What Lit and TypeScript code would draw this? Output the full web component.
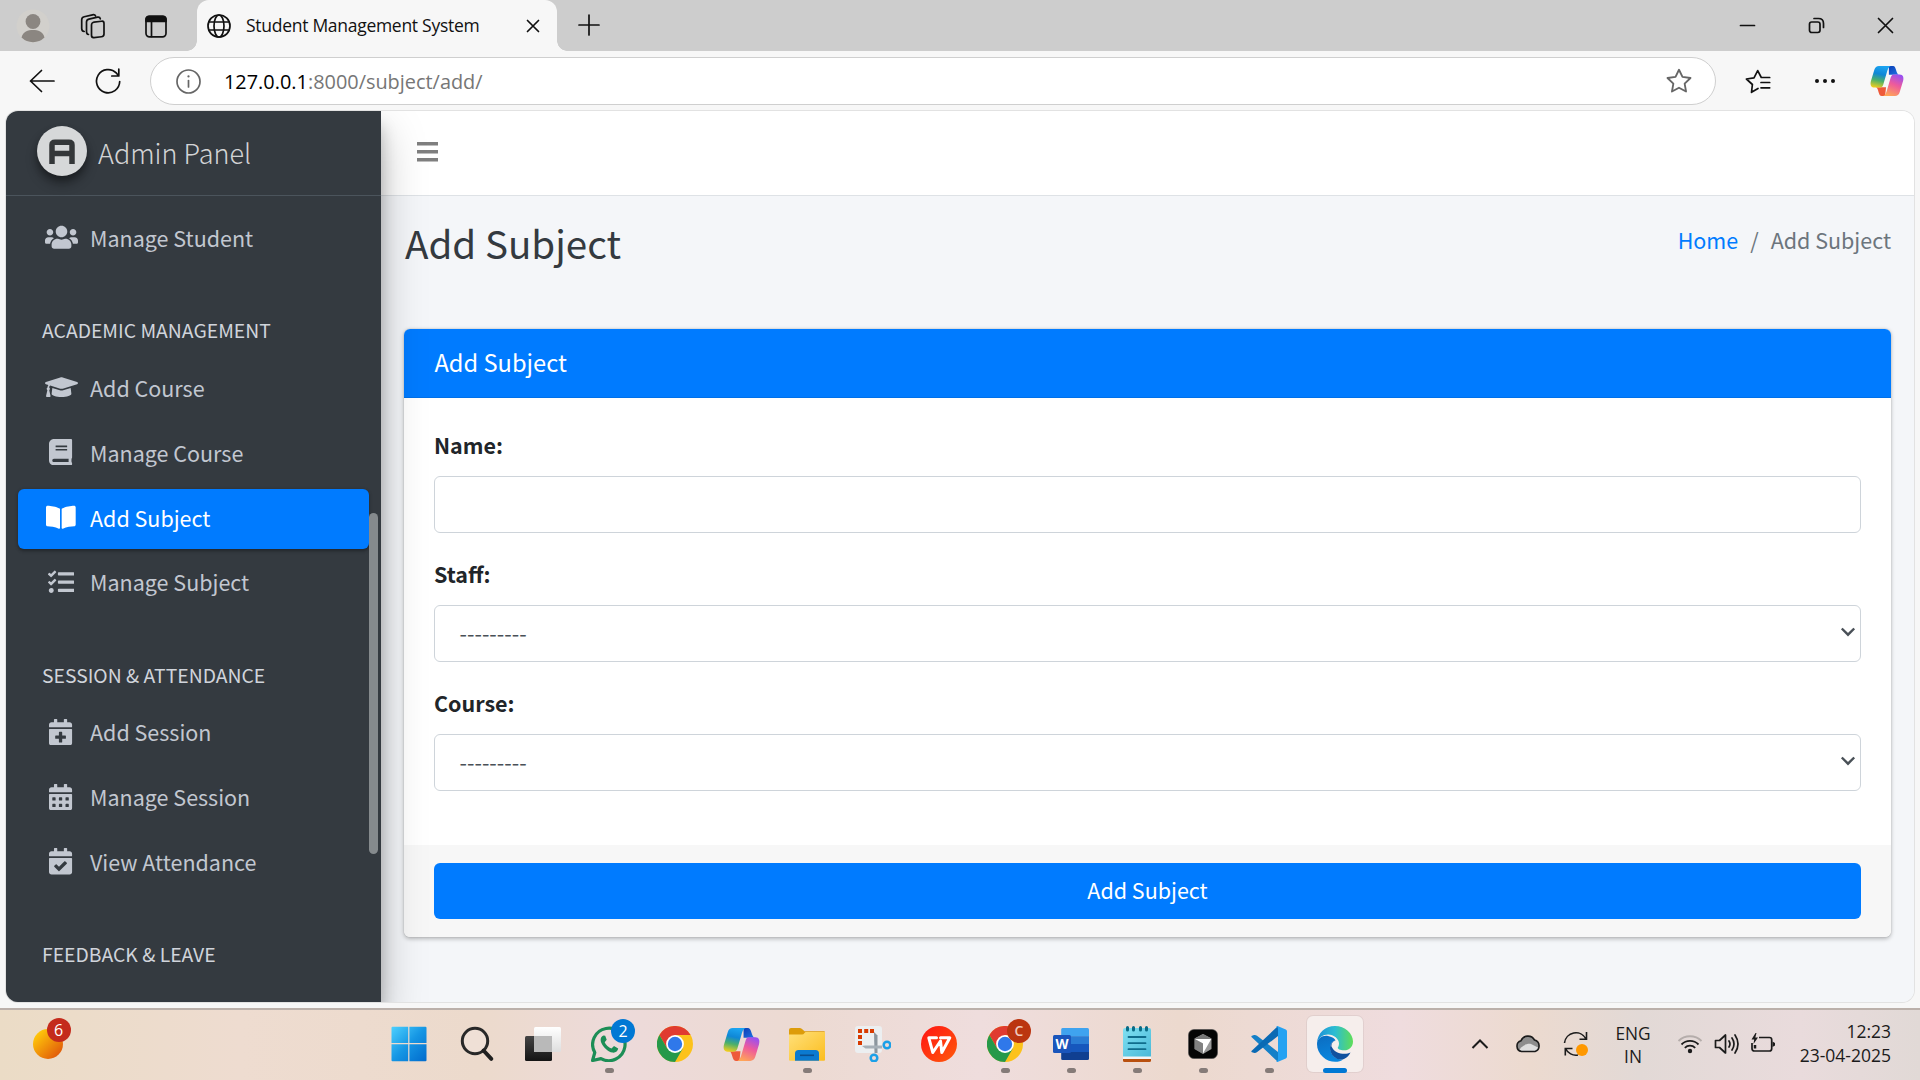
import { LitElement, html, svg, css, nothing } from "lit";
import { customElement } from "lit/decorators.js";

const uiFont = css`"Open Sans", "Noto Sans", sans-serif`;
const webFont = css`"Noto Sans CJK SC", "Noto Sans", sans-serif`;

/* ---------- Browser chrome icons ---------- */

const star = "M12 1.6 L15.2 8.2 L22.6 9.2 L17.2 14.4 L18.5 21.7 L12 18.2 L5.5 21.7 L6.8 14.4 L1.4 9.2 L8.8 8.2 Z";

const copilot = (size: number, id: string) => html`
  <svg width=${size} height=${size} viewBox="0 0 36 36">
    <defs>
      <linearGradient id="${id}a" x1="0.4" y1="0" x2="0.2" y2="1">
        <stop offset="0" stop-color="#1ba3f0" /><stop offset="0.35" stop-color="#0f87d6" />
        <stop offset="0.65" stop-color="#4cb06a" /><stop offset="1" stop-color="#f7cf1b" />
      </linearGradient>
      <linearGradient id="${id}b" x1="0.7" y1="0" x2="0.3" y2="1">
        <stop offset="0" stop-color="#9a50f0" /><stop offset="0.45" stop-color="#ee5a9c" />
        <stop offset="1" stop-color="#ffa657" />
      </linearGradient>
      <linearGradient id="${id}c" x1="0" y1="0" x2="1" y2="1">
        <stop offset="0" stop-color="#0b3fb5" /><stop offset="1" stop-color="#1f74e6" />
      </linearGradient>
    </defs>
    <path d="M20 2 H24.5 C28 2 27.5 11 31 11.5 H20 Z" fill="url(#${id}c)" />
    <path d="M16 34 H12.5 C8.500 34 9.500 25 6 24.500 H17 Z" fill="#ee5a3a" />
    <path d="M9.500 2 H22 C19.500 3 18.600 6 17.800 9 L14 22 C13.200 24.500 12 25 10 25 H4.500 C0.800 25 0 21.500 1 18 L4.600 6 C5.400 3.400 7 2 9.500 2 Z" fill="url(#${id}a)" />
    <path d="M26.500 34 H14 C16.500 33 17.400 30 18.200 27 L22 14 C22.800 11.500 24 11 26 11 H31.500 C35.200 11 36 14.500 35 18 L31.400 30 C30.600 32.600 29 34 26.500 34 Z" fill="url(#${id}b)" />
  </svg>`;

@customElement("browser-chrome")
class BrowserChrome extends LitElement {
  static styles = css`
    :host { display: block; font-family: ${uiFont}; color: #111; }
    svg { display: block; flex: none; fill: none; stroke: #111; stroke-width: 1.7; stroke-linecap: round; stroke-linejoin: round; }
    .copilot svg, .avatar { stroke: none; }
    .strip { height: 51px; background: #cdcdcd; display: flex; align-items: center; }
    .tools { width: 197px; box-sizing: border-box; padding: 1px 0 0 16px; display: flex; align-items: center; }
    .tools .spaces { margin-left: 30px; }
    .tools .pane { margin-left: 39px; }
    .tab { align-self: stretch; width: 360px; box-sizing: border-box; background: #f7f7f7; border-radius: 12px 12px 0 0; display: flex; align-items: center; padding: 1px 17px 0 10px; position: relative; }
    .tab::before, .tab::after { content: ""; position: absolute; bottom: 0; width: 10px; height: 10px; }
    .tab::before { left: -10px; background: radial-gradient(circle at 0 0, #cdcdcd 9.500px, #f7f7f7 10px); }
    .tab::after { right: -10px; background: radial-gradient(circle at 100% 0, #cdcdcd 9.500px, #f7f7f7 10px); }
    .title { margin: -2px 0 0 15px; font-size: 17.500px; line-height: 24px; white-space: nowrap; letter-spacing: -0.28px; }
    .tab .close { margin-left: auto; }
    .plus { margin: -1px 0 0 21px; }
    .controls { margin-left: auto; display: flex; align-items: center; padding-right: 26px; gap: 52px; }
    .bar { height: 60px; box-sizing: border-box; background: #f7f7f7; display: flex; align-items: center; padding-left: 29px; }
    .refresh { margin-left: 39px; }
    .address { margin-left: 29px; width: 1566px; height: 48px; box-sizing: border-box; border: 1.500px solid #cfcfcf; border-radius: 24px; background: #fff; display: flex; align-items: center; padding: 0 23px 0 25px; }
    .url { margin: 1px 0 0 23px; font-size: 19.900px; line-height: 26px; color: #767676; letter-spacing: 0; }
    .url b { font-weight: 400; color: #000; }
    .address .star { margin-left: auto; }
    .gray { stroke: #666; }
    .fav { margin-left: 29px; }
    .bar .dots { margin-left: 43px; stroke: none; fill: #111; }
    .copilot { margin-left: 34px; }
  `;
  render() {
    return html`
      <div class="strip">
        <div class="tools">
          <svg class="avatar" width="34" height="34" viewBox="0 0 34 34">
            <circle cx="17" cy="17" r="16.500" fill="#d2d0cc" />
            <circle cx="17" cy="12.500" r="7.400" fill="#8b8681" />
            <path d="M5.500 28.500 C7 22.500 12 21 17 21 C22 21 27 22.500 28.500 28.500 A16.500 16.500 0 0 1 5.500 28.500 Z" fill="#8b8681" />
          </svg>
          <svg class="spaces" width="26" height="26" viewBox="0 0 26 26">
            <rect x="11.500" y="8.500" width="12.500" height="15.500" rx="2.500" transform="skewY(-6) translate(0 2)" />
            <path d="M8.500 21.500 C6.800 21.300 6.500 20 6.500 18.500 V9 C6.500 7.400 7.400 6.500 8.900 6.100 L17.500 4.200 C19 3.900 20 4.500 20.300 5.800" />
            <path d="M4.200 18.500 C2.600 18.300 1.700 17 1.700 15.500 V6.800 C1.700 5 2.600 4.100 4.200 3.700 L12.500 1.800 C14 1.500 15.200 2 15.600 3" />
          </svg>
          <svg class="pane" width="22" height="23" viewBox="0 0 22 23">
            <rect x="1" y="1.300" width="20" height="20.500" rx="3.500" />
            <path d="M1 6.300 V4.500 Q1 1.300 4.200 1.300 H17.800 Q21 1.300 21 4.500 V6.300 Z" fill="#111" />
            <path d="M6.500 7 V21.500" />
          </svg>
        </div>
        <div class="tab">
          <svg width="24" height="24" viewBox="0 0 24 24">
            <circle cx="12" cy="12" r="11" /><ellipse cx="12" cy="12" rx="5" ry="11" />
            <path d="M2 8 H22 M2 16 H22" />
          </svg>
          <span class="title">Student Management System</span>
          <svg class="close" width="14" height="14" viewBox="0 0 14 14"><path d="M1.500 1.500 L12.500 12.500 M12.500 1.500 L1.500 12.500" /></svg>
        </div>
        <svg class="plus" width="22" height="22" viewBox="0 0 22 22"><path d="M11 1 V21 M1 11 H21" /></svg>
        <div class="controls">
          <svg width="17" height="16" viewBox="0 0 17 16"><path d="M1.500 7.500 H15.500" /></svg>
          <svg width="17" height="17" viewBox="0 0 17 17">
            <rect x="1.500" y="5" width="10.500" height="10.500" rx="2.200" />
            <path d="M6 1.500 H10.500 Q15.500 1.500 15.500 6.500 V10.500" />
          </svg>
          <svg width="17" height="17" viewBox="0 0 17 17"><path d="M1.500 1.500 L15.500 15.500 M15.500 1.500 L1.500 15.500" /></svg>
        </div>
      </div>
      <div class="bar">
        <svg width="27" height="24" viewBox="0 0 27 24"><path d="M1.500 12 H25 M12.500 1.500 L1.500 12 L12.500 22.500" /></svg>
        <svg class="refresh" width="26" height="26" viewBox="0 0 26 26">
          <path d="M24.700 13.500 A11.600 11.600 0 1 1 21.500 5.200 L23.600 7.700 M23.800 1.200 V8 H16.800" />
        </svg>
        <div class="address">
          <svg class="gray" width="25" height="25" viewBox="0 0 25 25">
            <circle cx="12.500" cy="12.500" r="11.500" /><path d="M12.500 11.500 V18" /><path d="M12.500 7.300 V7.500" stroke-width="2.200" />
          </svg>
          <span class="url"><b>127.0.0.1</b>:8000/subject/add/</span>
          <svg class="star gray" width="26" height="26" viewBox="0 0 24 24"><path d=${star} /></svg>
        </div>
        <svg class="fav" width="26" height="25" viewBox="0 0 26 25">
          <path d="M6.500 23.300 L7.400 15.500 L1.400 10 L9 8.800 L12.700 1.600 L16.300 8.500 H24.700 M16 13.500 H24.700 M16 18.800 H24.700 M6.500 23.300 L13 19.500" />
        </svg>
        <svg class="dots" width="22" height="6" viewBox="0 0 22 6">
          <circle cx="3" cy="3" r="2" /><circle cx="11" cy="3" r="2" /><circle cx="19" cy="3" r="2" />
        </svg>
        <div class="copilot">${copilot(34, "bc")}</div>
      </div>`;
  }
}

/* ---------- Sidebar ---------- */

const calendarTop = "M436 160H12c-6.600 0-12-5.400-12-12v-36c0-26.500 21.500-48 48-48h48V12c0-6.600 5.400-12 12-12h40c6.600 0 12 5.400 12 12v52h128V12c0-6.600 5.400-12 12-12h40c6.600 0 12 5.400 12 12v52h48c26.500 0 48 21.500 48 48v36c0 6.600-5.400 12-12 12zM12 192h424c6.600 0 12 5.400 12 12v260c0 26.500-21.500 48-48 48H48c-26.500 0-48-21.500-48-48V204c0-6.600 5.400-12 12-12z";

const navIcons: Record<string, { w: number; d: string }> = {
  users: { w: 640, d: "M96 224c35.300 0 64-28.700 64-64s-28.700-64-64-64-64 28.700-64 64 28.700 64 64 64zm448 0c35.300 0 64-28.700 64-64s-28.700-64-64-64-64 28.700-64 64 28.700 64 64 64zm32 32h-64c-17.600 0-33.500 7.100-45.100 18.600 40.300 22.100 68.900 62 75.100 109.400h66c17.700 0 32-14.300 32-32v-32c0-35.300-28.700-64-64-64zm-256 0c61.900 0 112-50.100 112-112S381.900 32 320 32 208 82.100 208 144s50.100 112 112 112zm76.800 32h-8.300c-20.800 10-43.900 16-68.500 16s-47.600-6-68.500-16h-8.300C179.600 288 128 339.600 128 403.200V432c0 26.500 21.500 48 48 48h288c26.500 0 48-21.500 48-48v-28.800c0-63.600-51.600-115.200-115.200-115.200zm-223.700-13.400C161.500 263.100 145.600 256 128 256H64c-35.300 0-64 28.700-64 64v32c0 17.700 14.300 32 32 32h65.900c6.300-47.400 34.900-87.300 75.200-109.400z" },
  cap: { w: 640, d: "M622.340 153.200L343.400 67.500c-15.200-4.670-31.600-4.670-46.790 0L17.660 153.200c-23.540 7.230-23.540 38.360 0 45.590l48.630 14.940c-10.670 13.190-17.230 29.280-17.880 46.900C38.780 266.150 32 276.110 32 288c0 10.780 5.680 19.850 13.860 25.650L20.330 428.530C18.110 438.520 25.710 448 35.940 448h56.110c10.240 0 17.840-9.480 15.620-19.470L82.140 313.650C90.320 307.850 96 298.780 96 288c0-11.570-6.470-21.250-15.660-26.870.76-15.020 8.440-28.300 20.690-36.720L296.600 284.500c9.060 2.780 26.440 6.250 46.790 0l278.950-85.700c23.550-7.240 23.550-38.360 0-45.600zM352.790 315.090c-28.530 8.760-52.840 3.920-65.590 0l-145.020-44.550L128 384c0 35.350 85.960 64 192 64s192-28.650 192-64l-14.180-113.470-145.030 44.560z" },
  book: { w: 448, d: "M448 360V24c0-13.300-10.700-24-24-24H96C43 0 0 43 0 96v320c0 53 43 96 96 96h328c13.300 0 24-10.700 24-24v-16c0-7.500-3.500-14.300-8.900-18.700-4.200-15.400-4.200-59.300 0-74.700 5.400-4.300 8.900-11.100 8.900-18.600zM128 134c0-3.300 2.700-6 6-6h212c3.300 0 6 2.700 6 6v20c0 3.300-2.700 6-6 6H134c-3.300 0-6-2.700-6-6v-20zm0 64c0-3.300 2.700-6 6-6h212c3.300 0 6 2.700 6 6v20c0 3.300-2.700 6-6 6H134c-3.300 0-6-2.700-6-6v-20zm253.400 250H96c-17.700 0-32-14.300-32-32 0-17.600 14.400-32 32-32h285.400c-1.900 17.100-1.900 46.900 0 64z" },
  open: { w: 576, d: "M542.220 32.050c-54.800 3.110-163.720 14.430-230.960 55.590-4.640 2.840-7.270 7.890-7.270 13.170v363.870c0 11.550 12.630 18.850 23.280 13.490 69.180-34.820 169.230-44.320 218.700-46.920 16.890-.89 30.020-14.430 30.020-30.660V62.750c.01-17.710-15.350-31.740-33.770-30.700zM264.730 87.640C197.500 46.480 88.580 35.170 33.780 32.050 15.360 31.010 0 45.040 0 62.750V400.600c0 16.240 13.130 29.780 30.020 30.660 49.490 2.600 149.590 12.110 218.770 46.950 10.620 5.350 23.210-1.940 23.210-13.460V100.630c0-5.290-2.620-10.140-7.270-12.990z" },
  tasks: { w: 512, d: "M139.610 35.500a12 12 0 0 0-17 0L58.930 98.810l-22.700-22.120a12 12 0 0 0-17 0L3.530 92.410a12 12 0 0 0 0 17l47.590 47.400a12.780 12.780 0 0 0 17.610 0l15.590-15.620L156.520 69a12.090 12.090 0 0 0 .09-17zm0 159.190a12 12 0 0 0-17 0l-63.680 63.720-22.700-22.100a12 12 0 0 0-17 0L3.530 252a12 12 0 0 0 0 17L51 316.500a12.770 12.770 0 0 0 17.600 0l15.700-15.690 72.200-72.220a12 12 0 0 0 .09-16.900zM64 368c-26.490 0-48.590 21.500-48.590 48S37.530 464 64 464a48 48 0 0 0 0-96zm432 16H208a16 16 0 0 0-16 16v32a16 16 0 0 0 16 16h288a16 16 0 0 0 16-16v-32a16 16 0 0 0-16-16zm0-320H208a16 16 0 0 0-16 16v32a16 16 0 0 0 16 16h288a16 16 0 0 0 16-16V80a16 16 0 0 0-16-16zm0 160H208a16 16 0 0 0-16 16v32a16 16 0 0 0 16 16h288a16 16 0 0 0 16-16v-32a16 16 0 0 0-16-16z" },
  plus: { w: 448, d: calendarTop + "m316 140c0-6.600-5.400-12-12-12h-60v-60c0-6.600-5.400-12-12-12h-40c-6.600 0-12 5.400-12 12v60h-60c-6.600 0-12 5.400-12 12v40c0 6.600 5.400 12 12 12h60v60c0 6.600 5.400 12 12 12h40c6.600 0 12-5.400 12-12v-60h60c6.600 0 12-5.400 12-12v-40z" },
  grid: { w: 448, d: calendarTop + "M76 256h40q12 0 12 12v40q0 12-12 12h-40q-12 0-12-12v-40q0-12 12-12zM204 256h40q12 0 12 12v40q0 12-12 12h-40q-12 0-12-12v-40q0-12 12-12zM332 256h40q12 0 12 12v40q0 12-12 12h-40q-12 0-12-12v-40q0-12 12-12zM76 384h40q12 0 12 12v40q0 12-12 12h-40q-12 0-12-12v-40q0-12 12-12zM204 384h40q12 0 12 12v40q0 12-12 12h-40q-12 0-12-12v-40q0-12 12-12zM332 384h40q12 0 12 12v40q0 12-12 12h-40q-12 0-12-12v-40q0-12 12-12z" },
  check: { w: 448, d: calendarTop + "M345.300 287.900l-28.200-28.400c-4.700-4.700-12.300-4.700-17-.1L194 364.700l-46.100-46.400c-4.700-4.700-12.300-4.700-17-.1l-28.400 28.200c-4.700 4.700-4.700 12.300-.1 17l82.600 83.300c4.700 4.700 12.300 4.700 17 .1l143.200-142c4.700-4.600 4.700-12.200 .1-16.900z" },
};

type NavEntry = { header: string } | { icon: string; label: string; active?: boolean };

const nav: NavEntry[] = [
  { icon: "users", label: "Manage Student" },
  { header: "ACADEMIC MANAGEMENT" },
  { icon: "cap", label: "Add Course" },
  { icon: "book", label: "Manage Course" },
  { icon: "open", label: "Add Subject", active: true },
  { icon: "tasks", label: "Manage Subject" },
  { header: "SESSION & ATTENDANCE" },
  { icon: "plus", label: "Add Session" },
  { icon: "grid", label: "Manage Session" },
  { icon: "check", label: "View Attendance" },
  { header: "FEEDBACK & LEAVE" },
];

@customElement("side-nav")
class SideNav extends LitElement {
  static styles = css`
    :host { display: flex; flex-direction: column; width: 375px; background: #343a40; font-family: ${webFont}; color: #c2c7d0; box-shadow: 0 21px 42px rgba(0, 0, 0, 0.25), 0 15px 15px rgba(0, 0, 0, 0.22); position: relative; z-index: 2; }
    svg { display: block; flex: none; }
    .brand { height: 85px; box-sizing: border-box; border-bottom: 1px solid #4b545c; display: flex; align-items: center; padding: 0 0 5px 31px; }
    .logo { width: 50px; height: 50px; border-radius: 50%; background: #d6d8d9; box-shadow: 0 8px 12px rgba(0, 0, 0, 0.3), 0 4px 6px rgba(0, 0, 0, 0.25); }
    .name { margin: 4px 0 0 11px; font-size: 27px; font-weight: 300; line-height: 36px; color: rgba(255, 255, 255, 0.8); white-space: nowrap; }
    .list { flex: 1; min-height: 0; padding: 13.400px 12px 0; position: relative; }
    .item { height: 60px; margin-bottom: 4.800px; border-radius: 6px; display: flex; align-items: center; padding-left: 24px; box-sizing: border-box; font-size: 21.500px; white-space: nowrap; }
    .item.active { background: #007bff; color: #fff; box-shadow: 0 1.500px 4.500px rgba(0, 0, 0, 0.12), 0 1.500px 3px rgba(0, 0, 0, 0.24); }
    .icon { width: 38px; display: flex; justify-content: center; margin: 0 10px 4px 0; }
    .label { line-height: 36px; margin-top: -3px; }
    .header { padding: 38px 0 11.300px 24px; font-size: 19.350px; line-height: 36px; color: #d0d4db; white-space: nowrap; }
    .thumb { position: absolute; left: 363px; top: 317px; width: 9px; height: 341px; border-radius: 5px; background: #858a8d; }
  `;
  render() {
    return html`
      <div class="brand">
        <svg class="logo" viewBox="0 0 50 50">
          <g fill="none" stroke="#343739" stroke-width="5.500">
            <path d="M15 38 V19 Q15 16.200 18 16.200 H32 Q35 16.200 35 19 V38" />
            <path d="M15 27.500 H35" />
          </g>
        </svg>
        <span class="name">Admin Panel</span>
      </div>
      <div class="list">
        ${nav.map((n) =>
          "header" in n
            ? html`<div class="header">${n.header}</div>`
            : html`<div class="item ${n.active ? "active" : ""}">
                <span class="icon">
                  <svg width=${(navIcons[n.icon].w / 512) * 26.4} height="26.4" viewBox="0 0 ${navIcons[n.icon].w} 512" fill="currentColor" fill-rule="evenodd"><path d=${navIcons[n.icon].d} /></svg>
                </span>
                <span class="label">${n.label}</span>
              </div>`
        )}
        <div class="thumb"></div>
      </div>`;
  }
}

/* ---------- Subject form ---------- */

@customElement("subject-page")
class SubjectPage extends LitElement {
  static styles = css`
    :host { display: block; flex: 1; min-width: 0; background: #f4f6f9; font-family: ${webFont}; font-size: 21.500px; color: #212529; }
    .navbar { height: 85px; box-sizing: border-box; border-bottom: 1.500px solid #dee2e6; background: #fff; display: flex; align-items: center; padding: 0 0 2px 36px; }
    .head { display: flex; justify-content: space-between; padding: 20px 23px 0 24px; height: 133px; box-sizing: border-box; white-space: nowrap; }
    h1 { margin: 0; font-size: 38.600px; line-height: 52px; font-weight: 400; color: #343a40; }
    .crumbs { display: flex; line-height: 36px; margin-top: 6px; color: #6c757d; }
    .crumbs a { color: #007bff; }
    .crumbs i { font-style: normal; padding: 0 12px; }
    .card { margin: 0 23px; height: 608px; display: flex; flex-direction: column; background: #fff; border-radius: 6px; overflow: hidden; box-shadow: 0 0 1.500px rgba(0, 0, 0, 0.2), 0 1.500px 4.500px rgba(0, 0, 0, 0.25); }
    .card-head { height: 69px; box-sizing: border-box; background: #007bff; border-bottom: 1px solid #0070e8; color: #fff; font-size: 23.650px; line-height: 66px; padding-left: 30.500px; }
    .fields { flex: 1; padding: 30px; }
    .field { margin-bottom: 24px; }
    label { display: block; height: 48px; line-height: 34px; font-weight: 700; }
    .control { height: 57px; box-sizing: border-box; border: 1.500px solid #ced4da; border-radius: 6px; display: flex; align-items: center; justify-content: space-between; padding: 0 4px 2px 24.500px; color: #495057; }
    .control svg { display: block; }
    .foot { height: 92.500px; box-sizing: border-box; background: #f7f7f7; padding: 18px 30px; }
    .btn { height: 56px; border-radius: 6px; background: #007bff; color: #fff; text-align: center; line-height: 54px; }
  `;
  private control(text?: string) {
    return html`<div class="control">
      ${text
        ? html`<span>${text}</span>
            <svg width="16" height="10" viewBox="0 0 16 10" fill="none" stroke="#495057" stroke-width="2.400"><path d="M1.800 1.500 L8 7.700 L14.200 1.500" /></svg>`
        : nothing}
    </div>`;
  }
  render() {
    return html`
      <div class="navbar">
        <svg width="21" height="20" viewBox="0 0 21 20" fill="#7f7f7f"><path d="M0 0h21v3.500H0zM0 8h21v3.500H0zM0 16h21v3.500H0z" /></svg>
      </div>
      <div class="head">
        <h1>Add Subject</h1>
        <div class="crumbs"><a>Home</a><i>/</i><span>Add Subject</span></div>
      </div>
      <div class="card">
        <div class="card-head">Add Subject</div>
        <div class="fields">
          <div class="field"><label>Name:</label>${this.control()}</div>
          <div class="field"><label>Staff:</label>${this.control("---------")}</div>
          <div class="field"><label>Course:</label>${this.control("---------")}</div>
        </div>
        <div class="foot"><div class="btn">Add Subject</div></div>
      </div>`;
  }
}

/* ---------- Taskbar ---------- */

const chrome = svg`
  <circle cx="18" cy="18" r="18" fill="#fcc21b" />
  <path d="M2.400 9 A18 18 0 0 1 33.600 9 H18 L10.200 22.500 Z" fill="#e03b30" />
  <path d="M2.400 9 L10.200 22.500 L18 26 L25.800 22.500 L18 36 A18 18 0 0 1 2.400 9 Z" fill="#26994a" />
  <circle cx="18" cy="18" r="8.900" fill="#fff" /><circle cx="18" cy="18" r="7.200" fill="#2f78ea" />`;

const wrap = (content: unknown) => html`<svg width="36" height="36" viewBox="0 0 36 36">${content}</svg>`;

const apps: { art: unknown; running?: boolean; active?: boolean; badge?: string; tone?: string }[] = [
  { art: wrap(svg`
      <defs><linearGradient id="win" x1="0" y1="0" x2="36" y2="36" gradientUnits="userSpaceOnUse"><stop offset="0" stop-color="#4fd2ff" /><stop offset="0.500" stop-color="#1596e4" /><stop offset="1" stop-color="#0069cc" /></linearGradient></defs>
      <path fill="url(#win)" d="M1.500 .8H17.200V17H.5V1.800Q.5.800 1.500.800ZM18.400.800H34.500Q35.500.800 35.500 1.800V17H18.400ZM.5 18.200H17.200V35.200H1.500Q.5 35.200.5 34.200ZM18.400 18.200H35.500V34.200Q35.500 35.200 34.500 35.200H18.400Z" />`) },
  { art: wrap(svg`<circle cx="16" cy="15" r="12.700" fill="#f2e6e0" fill-opacity=".5" stroke="#282828" stroke-width="3" /><path d="M24.500 24.500 L32.300 32.800" stroke="#202020" stroke-width="4" stroke-linecap="round" />`) },
  { art: wrap(svg`
      <defs><linearGradient id="tv" x1="0" y1="0" x2="0" y2="1"><stop offset="0" stop-color="#444" /><stop offset="1" stop-color="#141414" /></linearGradient>
      <linearGradient id="tw" x1="0" y1="0" x2="0" y2="1"><stop offset="0" stop-color="#fff" /><stop offset="1" stop-color="#dedede" /></linearGradient></defs>
      <rect x="0" y="10" width="27" height="25" rx="1.500" fill="url(#tv)" /><rect x="9" y="1" width="27" height="25" rx="1.500" fill="url(#tw)" /><path d="M9 10H27V26H9Z" fill="#b9b9b9" />`) },
  { running: true, badge: "2", tone: "blue", art: wrap(svg`
      <path d="M1.500 34.500 L3.800 26.500 A16.200 16.200 0 1 1 10 32.600 Z" fill="none" stroke="#1c8e56" stroke-width="3.200" stroke-linejoin="round" />
      <path d="M12.500 9.500 C9.500 10.500 9 14 10.500 17.200 C12.800 22 17 25.500 21.500 26.600 C24.500 27 27 25 27.200 22.500 L23 20 L20.500 22.500 C17.500 21.500 14.800 18.800 13.700 16.200 L15.700 13.700 L14.200 9.800 Z" fill="#1c8e56" />`) },
  { art: wrap(chrome) },
  { art: copilot(37, "tb") },
  { running: true, art: wrap(svg`
      <defs><linearGradient id="fo" x1="0" y1="0" x2="1" y2="1"><stop offset="0" stop-color="#ffe07a" /><stop offset="1" stop-color="#fbbd1e" /></linearGradient></defs>
      <path d="M0 4 Q0 2 2 2 H10.500 Q12 2 13 3 L15.500 5.200 H35 Q36 5.200 36 6.500 V12 H0 Z" fill="#dd9c0a" />
      <path d="M0 8.500 H13 Q14.500 8.500 15.500 7 L16.500 6 H36 V33.500 Q36 34.700 35 34.700 H1 Q0 34.700 0 33.500 Z" fill="url(#fo)" />
      <path d="M6 34.700 V27.500 Q6 24 9.500 24 H26.500 Q30 24 30 27.500 V34.700 Z" fill="#0b7ad0" /><path d="M11 29.300 H25" stroke="#0a4e8f" stroke-width="1.600" />`) },
  { art: wrap(svg`
      <rect x="0" y="0" width="27" height="27" rx="3" fill="#eceff1" />
      <g fill="#d83b01"><path d="M3 3h4v4H3zM9.200 3h4v4h-4zM15 3h4v4h-4zM3 9h4v4H3zM3 15h4v4H3z" /></g>
      <path d="M19 6 L22.500 9.500 V27 H19.500 Z" fill="#8b969e" /><path d="M7 20 L10.500 22.500 H27 V19.500 H10 Z" fill="#a6b0b8" />
      <circle cx="32" cy="19" r="3.300" fill="none" stroke="#1ba0e8" stroke-width="2.500" /><circle cx="19" cy="32" r="3.300" fill="none" stroke="#1ba0e8" stroke-width="2.500" />`) },
  { art: wrap(svg`
      <defs><linearGradient id="wps" x1="0" y1="0" x2="1" y2="1"><stop offset="0" stop-color="#ff1414" /><stop offset="1" stop-color="#ff5a0a" /></linearGradient></defs>
      <circle cx="18" cy="18" r="18" fill="url(#wps)" />
      <path d="M15.500 11.800 H7.800 L11.800 26.500 L19.500 15 L20.800 26.500 L28.800 11.800 H19.500" fill="none" stroke="#fff" stroke-width="3" stroke-linejoin="round" stroke-linecap="round" />`) },
  { running: true, badge: "C", tone: "brick", art: wrap(chrome) },
  { running: true, art: wrap(svg`
      <path d="M9.500 2 H34.500 Q36 2 36 3.500 V10.500 H8.200 V3.500 Q8.200 2 9.500 2Z" fill="#3fa3ef" /><path d="M8.200 10.200H36V18H8.200z" fill="#2a7cd4" /><path d="M8.200 18H36V26H8.200z" fill="#1657bd" /><path d="M8.200 26H36V32.500Q36 34 34.500 34H9.500Q8.200 34 8.200 32.500Z" fill="#103f91" />
      <rect x="0" y="9" width="18" height="18" rx="1.500" fill="#1a55bb" />
      <text x="9" y="22.800" text-anchor="middle" font-family="Open Sans, sans-serif" font-weight="700" font-size="13.500" fill="#fff">W</text>`) },
  { running: true, art: wrap(svg`
      <defs><linearGradient id="np" x1="0" y1="0" x2="1" y2="1"><stop offset="0" stop-color="#7fe0f2" /><stop offset="1" stop-color="#4ab9d8" /></linearGradient></defs>
      <path d="M4 30H32V34.500Q32 36 30.500 36H5.500Q4 36 4 34.500Z" fill="#b9500f" /><path d="M4 28H32V33H4z" fill="#f5f5f5" />
      <path d="M4 4Q4 2 6 2H30Q32 2 32 4V30.500H4Z" fill="url(#np)" />
      <path d="M8.500 1.500v2.500M14.500 1.500v2.500M21.500 1.500v2.500M27.500 1.500v2.500" stroke="#0a6a85" stroke-width="3" stroke-linecap="round" />
      <path d="M9.500 11H26.500M9.500 17.200H26.500M9.500 23.200H26.500" stroke="#0f6c8c" stroke-width="1.800" stroke-linecap="round" />`) },
  { running: true, art: wrap(svg`
      <rect x="3.500" y="3.500" width="29" height="29" rx="5.500" fill="#050505" stroke="#4a4a4a" stroke-width=".6" />
      <path d="M18 8 L26.500 12.500 V23 L18 28 L9.500 23 V12.500 Z" fill="#9a9a9a" /><path d="M9.500 12.500 L18 8 L26.500 12.500 L18 14Z" fill="#777" /><path d="M10 13 H26.200 L18 27.500 V17.500 Z" fill="#fff" /><path d="M9.500 13 L18 17.500 V28 L9.500 23Z" fill="#6d6d6d" fill-opacity=".55" />`) },
  { running: true, art: wrap(svg`
      <path d="M1 11.500 Q-.3 10.500 1 9.800 L3 9 Q4.500 8.600 6 9.800 L27 26 V36 Z" fill="#1580c8" />
      <path d="M1 24.500 Q-.3 25.500 1 26.200 L3.500 27 Q5 27 6.500 25.800 L27 10 V0 Z" fill="#0a6ab4" />
      <path d="M26.500 0 L34.800 3.500 Q36 4.200 36 5.500 V30.500 Q36 31.800 34.800 32.500 L26.500 36 Q25.500 36 25 35.200 Q27 35.500 27 33 V3 Q27 .5 25 .8 Q25.600 0 26.500 0Z" fill="#25a2f2" />`) },
  { running: true, active: true, art: wrap(svg`
      <defs><linearGradient id="eg" x1="0" y1="0.500" x2="1" y2="0.500"><stop offset="0" stop-color="#1c8fd8" /><stop offset="0.500" stop-color="#2cbdd2" /><stop offset="1" stop-color="#5fdd57" /></linearGradient>
      <linearGradient id="eb" x1="0" y1="0" x2="0.300" y2="1"><stop offset="0" stop-color="#0c6cc0" /><stop offset="1" stop-color="#0a86de" /></linearGradient></defs>
      <path d="M0 18 C0 12 6 9 11 10 C16 11 18 13 18.500 14.500 C15 15 12.500 19 13.500 24 C14.500 30 20 34 26 33.500 C22 37 12 37 6 31 C2 27.500 0 23 0 18 Z" fill="url(#eb)" />
      <path d="M18.500 14.500 C14.500 15.500 12 20 13.500 25 C15 31 21 35 27 33 C30 31.500 32.500 29 33.500 26.500 C29 29 18 28.500 14.500 20.500 C14 18 15.500 15.500 18.500 14.500Z" fill="#11519f" />
      <path d="M0 17 C.5 7 8 0 18 0 C28 0 36 7.500 36 15.500 C36 21.500 31.500 24.500 27 24.300 C23 24.200 20.500 23 20.800 21.500 C21.500 20.500 22 19 22 17.500 C22 13 17 8.500 11 8.500 C6 8.500 1.500 11.500 0 17 Z" fill="url(#eg)" />`) },
];

@customElement("task-bar")
class TaskBar extends LitElement {
  static styles = css`
    :host { display: flex; height: 72px; box-sizing: border-box; border-top: 2px solid #bbb0aa; font-family: ${uiFont}; color: #1b1b1b;
      background: linear-gradient(90deg, #ebdcc6 0, #eedcd0 240px, #ecdacc 480px, #eddada 620px, #ecdad2 800px, #efdddd 980px, #ecd9ce 1180px, #efdcde 1400px, #ecdacf 1530px, #e2d9d6 1640px, #e9dbdc 1800px, #e1d9d6 1920px); }
    svg { display: block; flex: none; }
    .weather { width: 376px; box-sizing: border-box; padding: 19px 0 0 33px; }
    .sun { width: 30px; height: 30px; border-radius: 50%; background: linear-gradient(135deg, #ffc60a 15%, #e0570a 90%); position: relative; }
    .badge { position: absolute; width: 24px; height: 24px; border-radius: 50%; color: #fff; font-size: 16px; line-height: 24px; text-align: center; }
    .sun .badge { left: 13.500px; top: -11px; background: #c42b1c; }
    .app { width: 56px; height: 56px; margin: 6px 5px 0; border-radius: 6px; display: flex; justify-content: center; align-items: center; position: relative; }
    .app:first-child { margin-right: 7px; }
    .app.active { background: #f6eeec; box-shadow: 0 0 0 1px rgba(0, 0, 0, 0.05); }
    .app .badge { left: 30px; top: 3px; }
    .blue { background: #0078d4; }
    .brick { background: #bb3510; font-size: 14px; color: #f0c9bd; font-weight: 600; }
    .running::after { content: ""; position: absolute; bottom: -1px; left: 23.500px; width: 9px; height: 5px; border-radius: 3px; background: #857b78; }
    .active::after { left: 16px; width: 24px; background: #0078d4; }
    .apps { display: flex; }
    .tray { margin-left: auto; display: flex; align-items: center; padding: 0 29px 2px 0; }
    .tray > * { flex: none; }
    .lang { width: 60px; text-align: center; font-size: 17.300px; line-height: 23px; margin-left: 3px; padding-top: 1px; }
    .wifi { margin-left: 14px; }
    .sound { margin-left: 11px; }
    .battery { margin-left: 10px; }
    .clock { width: 110px; text-align: right; font-size: 17.500px; line-height: 24px; margin-left: 5px; padding-bottom: 2px; white-space: nowrap; }
  `;
  render() {
    return html`
      <div class="weather"><div class="sun"><span class="badge">6</span></div></div>
      <div class="apps">
        ${apps.map((a) => html`
          <div class="app ${a.running ? "running" : ""} ${a.active ? "active" : ""}">
            ${a.art}${a.badge ? html`<span class="badge ${a.tone}">${a.badge}</span>` : nothing}
          </div>`)}
      </div>
      <div class="tray">
        <svg width="48" height="26" viewBox="0 0 48 26" fill="none" stroke="#1b1b1b" stroke-width="2"><path d="M16.500 17 L24 9.500 L31.500 17" /></svg>
        <svg width="48" height="26" viewBox="0 0 48 26">
          <path d="M17.500 20.500 A5.500 5.500 0 0 1 17 9.800 A7.500 7.500 0 0 1 30.500 9 A6 6 0 0 1 31 20.500 Z" fill="#8d8d8d" />
          <path d="M15 20 C16 16 22 12 27 13 L35 17 Q34.500 20.500 31 20.500 H17.500 Z" fill="#dedede" />
          <path d="M17.500 20.500 A5.500 5.500 0 0 1 17 9.800 A7.500 7.500 0 0 1 30.500 9 A6 6 0 0 1 31 20.500 Z" fill="none" stroke="#1b1b1b" stroke-width="1.600" />
        </svg>
        <svg width="48" height="28" viewBox="0 0 48 28" fill="none" stroke="#1b1b1b" stroke-width="1.600">
          <path d="M12.500 13 A11.500 11.500 0 0 1 34 8.800 M34.500 2 V9.300 H27.500 M26 25 A11.500 11.500 0 0 1 13.500 18.500 M13.300 25.500 V18.500 H20.500" />
          <circle cx="30" cy="20" r="6" fill="#ff9800" stroke="none" />
        </svg>
        <div class="lang">ENG<br />IN</div>
        <svg class="wifi" width="26" height="22" viewBox="0 0 26 22" fill="none" stroke="#1b1b1b" stroke-width="1.800">
          <path d="M1.500 8 A16.300 16.300 0 0 1 24.500 8" stroke="#b5adab" />
          <path d="M4.500 11.500 A12 12 0 0 1 21.500 11.500 M7.800 14.800 A7.500 7.500 0 0 1 18.200 14.800" /><circle cx="13" cy="18" r="2.200" fill="#1b1b1b" stroke="none" />
        </svg>
        <svg class="sound" width="26" height="22" viewBox="0 0 26 22" fill="none" stroke="#1b1b1b" stroke-width="1.700" stroke-linejoin="round" stroke-linecap="round">
          <path d="M1.500 7.500 H5.500 L11.500 2 V20 L5.500 14.500 H1.500 Z M15 8 Q17 11 15 14 M18 5 Q22 11 18 17 M21 2 Q27 11 21 20" />
        </svg>
        <svg class="battery" width="26" height="22" viewBox="0 0 26 22" fill="none" stroke="#1b1b1b" stroke-width="1.700">
          <path d="M9 4.500 H19.500 Q21.700 4.500 21.700 6.700 V15.500 Q21.700 18 19.500 18 H4.500 Q2 18 2 15.500 V10" /><path d="M22.500 8.500 L25 10 V12.500 L22.500 14 Z" fill="#1b1b1b" stroke="none" />
          <path d="M5.500 0 L1.500 6.500 H4.200 L3.500 11 L8 4.500 H5.300 L6.500 0 Z" fill="#1b1b1b" stroke="none" /><path d="M5 12 V15.500" stroke-width="2.500" />
        </svg>
        <div class="clock">12:23<br />23-04-2025</div>
      </div>`;
  }
}

/* ---------- Root ---------- */

@customElement("app-root")
class AppRoot extends LitElement {
  static styles = css`
    :host { display: flex; flex-direction: column; width: 1920px; height: 1080px; background: #f7f7f7; overflow: hidden; }
    .viewport { margin: 0 6px 6px; height: 891px; display: flex; border-radius: 12px; overflow: hidden; box-shadow: 0 0 0 1px #e2e2e2; }
  `;
  render() {
    return html`
      <browser-chrome></browser-chrome>
      <div class="viewport"><side-nav></side-nav><subject-page></subject-page></div>
      <task-bar></task-bar>`;
  }
}
